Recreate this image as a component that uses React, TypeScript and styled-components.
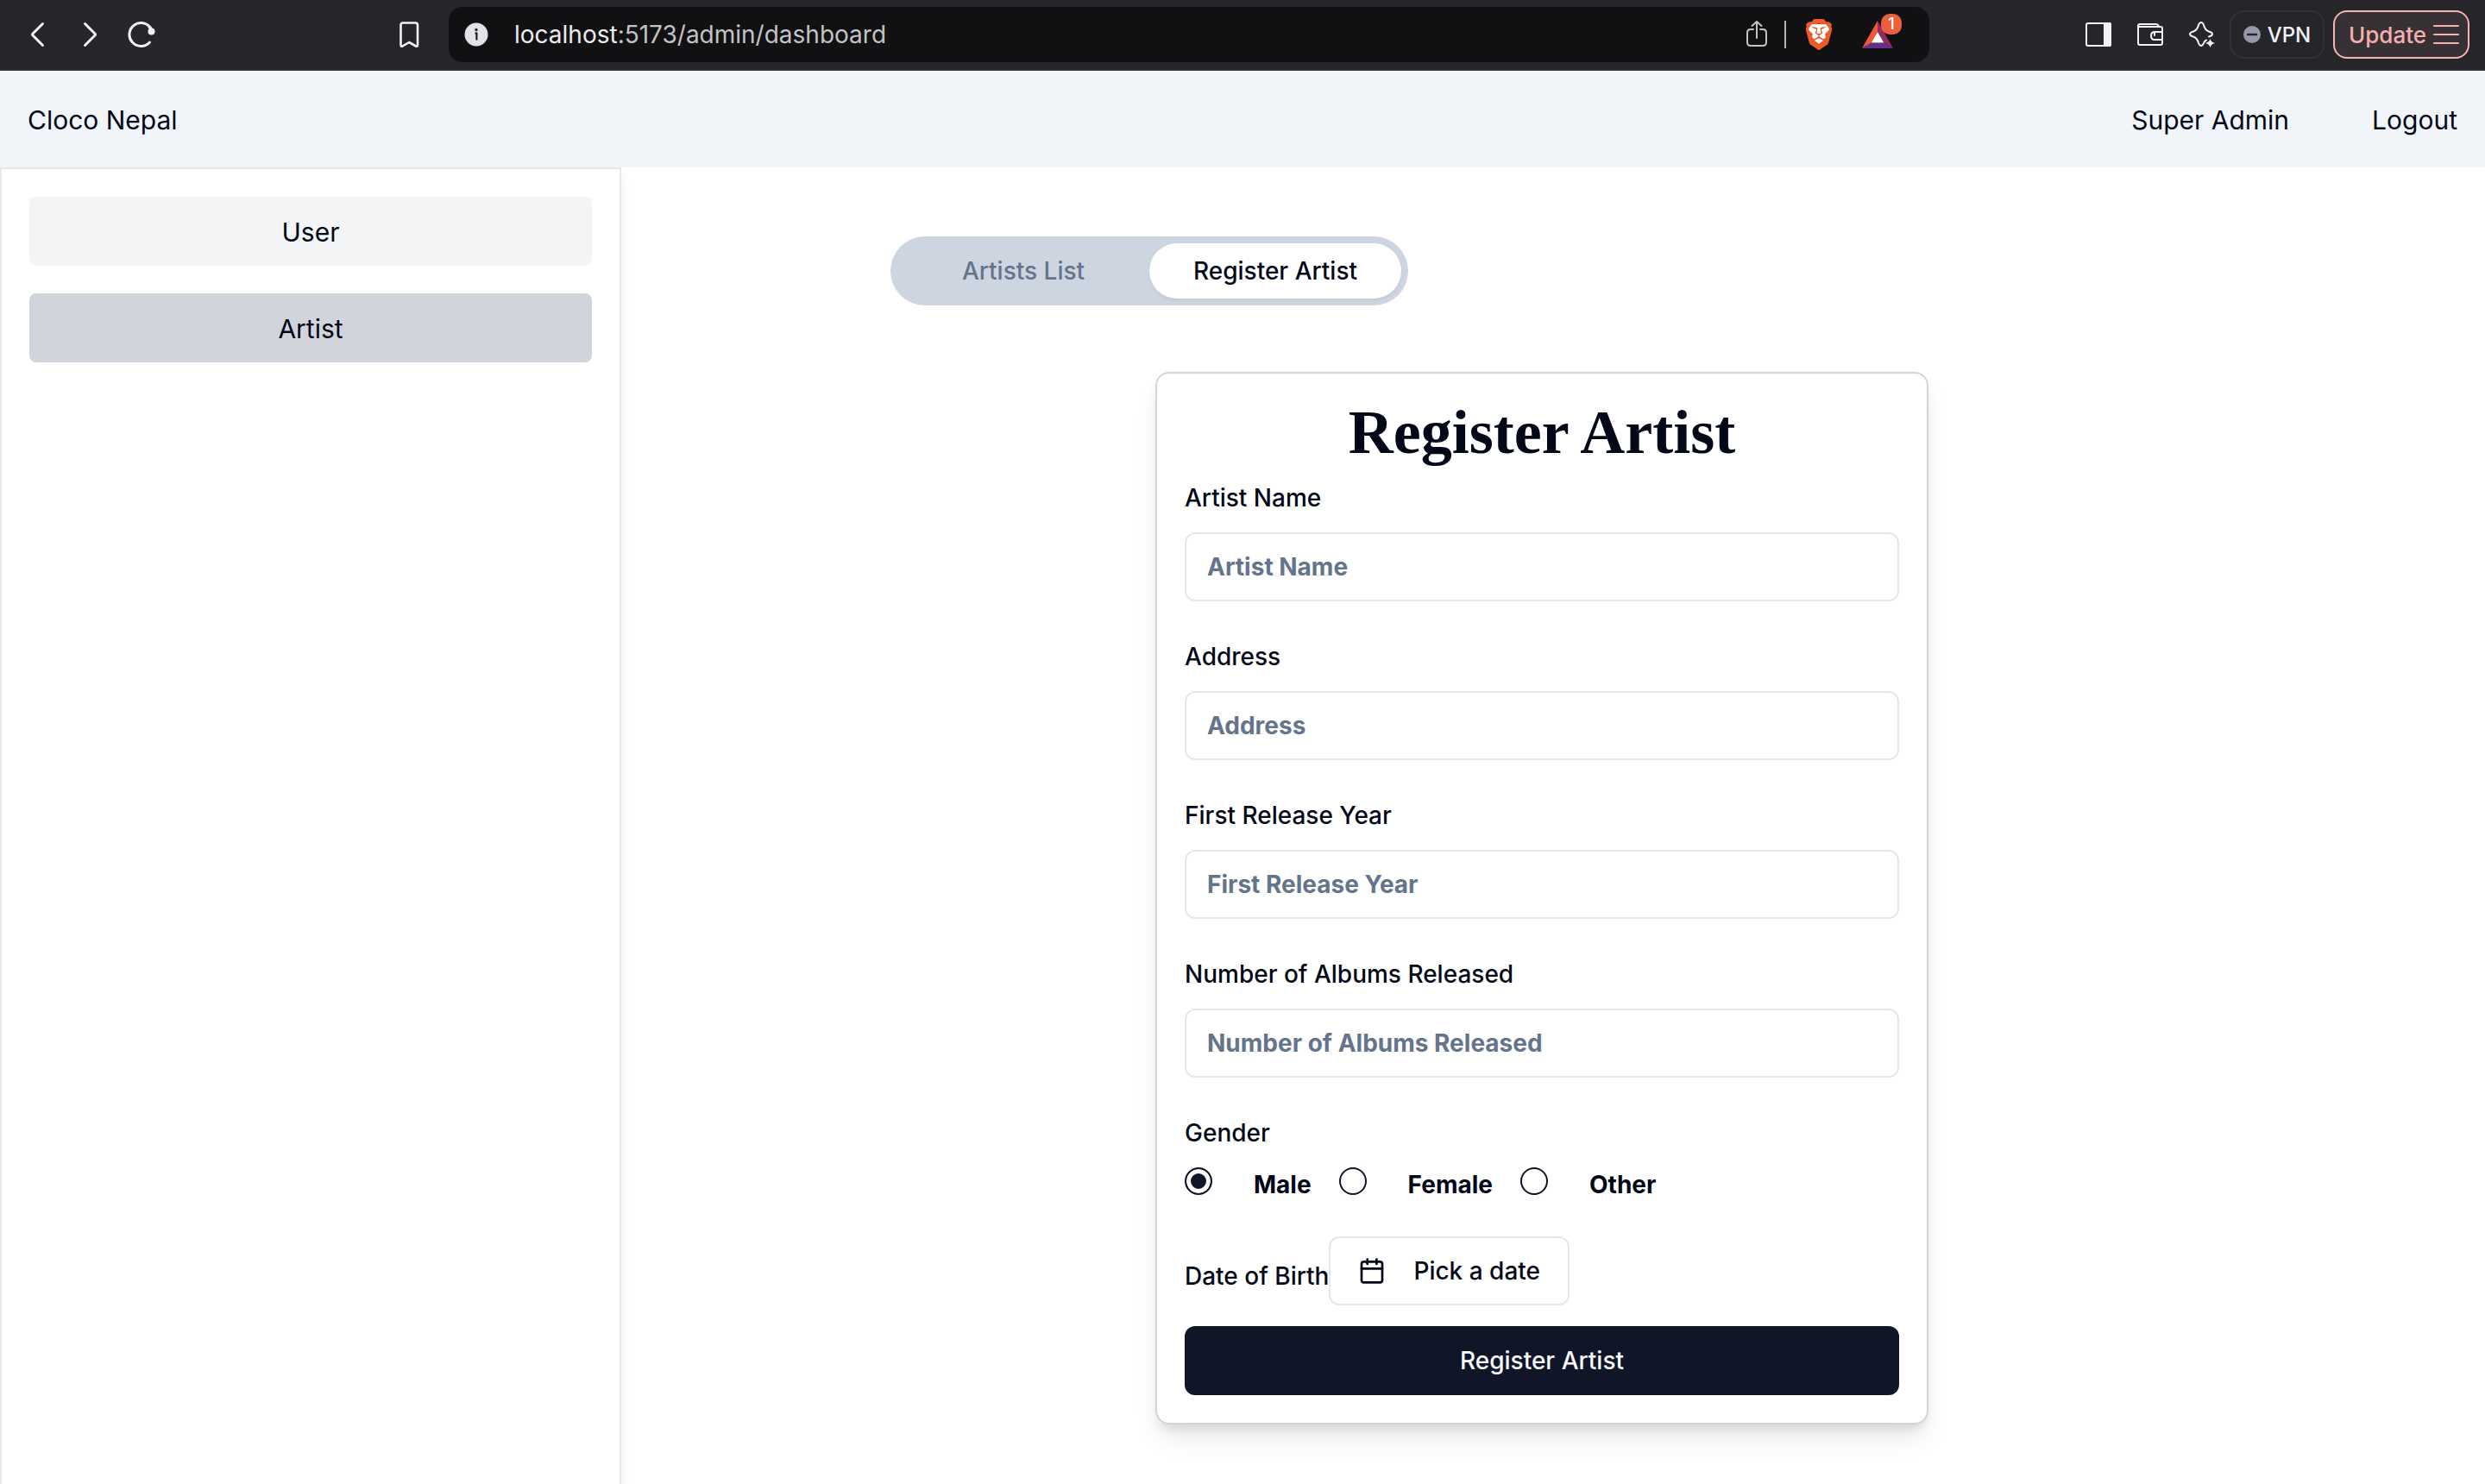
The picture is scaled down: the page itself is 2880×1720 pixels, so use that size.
import React, { useState } from "react";
import styled, { createGlobalStyle } from "styled-components";
import { SiBrave } from "react-icons/si";

const ink = "#020817";
const navy = "#111528";
const muted = "#64748b";
const line = "#e2e8f0";
const chrome = "#26252a";
const chromeIcon = "#f1f2f5";
const sans = `Inter, "Liberation Sans", sans-serif`;

const GlobalStyle = createGlobalStyle`
  *, *::before, *::after { box-sizing: border-box; }
  body { margin: 0; background: #fff; color: ${ink}; font-family: ${sans}; }
  button, input { font: inherit; color: inherit; margin: 0; }
  button { cursor: pointer; border: 0; background: none; padding: 0; }
  svg { display: block; }
`;

const Page = styled.div`
  display: flex;
  flex-direction: column;
  min-height: 100vh;
`;

/* Browser toolbar */

const Toolbar = styled.div`
  display: flex;
  align-items: center;
  height: 82px;
  padding: 0 18px 0 14px;
  background: ${chrome};
  border-bottom: 2px solid #352f33;
  color: ${chromeIcon};
`;

const NavGroup = styled.div`
  display: flex;
  width: 490px;
`;

const IconButton = styled.button<{ $push?: boolean }>`
  display: grid;
  place-items: center;
  width: 60px;
  height: 60px;
  margin-left: ${(p) => (p.$push ? "auto" : "0")};
`;

const AddressBar = styled.div`
  display: flex;
  align-items: center;
  flex: 1;
  height: 64px;
  margin: 0 166px 0 16px;
  padding: 0 32px 0 18px;
  background: #111113;
  border-radius: 16px;
`;

const Url = styled.div`
  flex: 1;
  padding-left: 30px;
  font-size: 28px;
  line-height: 40px;
  color: #c3c3c5;

  span { color: #ececee; }
`;

const BarActions = styled.div`
  display: flex;
  align-items: center;
`;

const BarDivider = styled.span`
  width: 2px;
  height: 32px;
  margin: 0 20px;
  background: #b5b5b7;
`;

const BarButton = styled.button`
  position: relative;
  display: grid;
  place-items: center;
`;

const RewardsButton = styled(BarButton)`
  margin-left: 32px;
  padding-right: 10px;
`;

const Badge = styled.span`
  position: absolute;
  top: -8px;
  right: 0;
  width: 24px;
  height: 24px;
  border-radius: 10px;
  background: #ec5f3c;
  color: #fff;
  font-size: 18px;
  font-weight: 500;
  line-height: 24px;
  text-align: center;
`;

const ChromeButton = styled.button`
  display: flex;
  align-items: center;
  justify-content: center;
  width: 110px;
  height: 56px;
  margin-left: 2px;
  gap: 8px;
  border: 2px solid #323136;
  border-radius: 16px;
  font-size: 24px;
  font-weight: 500;
`;

const UpdateButton = styled(ChromeButton)`
  width: 158px;
  margin-left: 10px;
  padding-left: 6px;
  border-color: #f8b4b0;
  background: #373034;
  color: #f5b0ad;
  font-size: 26px;
`;

/* Application */

const Header = styled.header`
  display: flex;
  align-items: center;
  justify-content: space-between;
  height: 112px;
  padding: 2px 32px 0;
  background: #f1f5fa;
  font-size: 30px;
  line-height: 48px;
`;

const HeaderLinks = styled.nav`
  display: flex;
  gap: 96px;

  a { color: inherit; text-decoration: none; }
`;

const Body = styled.div`
  display: flex;
  flex: 1;
`;

const Sidebar = styled.aside`
  display: flex;
  flex-direction: column;
  gap: 32px;
  width: 25%;
  padding: 32px;
  border: 2px solid #e5e7eb;
  border-bottom: 0;
  box-shadow: 0 8px 12px -2px rgba(0, 0, 0, 0.1);
`;

const SideButton = styled.button<{ $active?: boolean }>`
  height: 80px;
  padding-top: 2px;
  border-radius: 8px;
  background: ${(p) => (p.$active ? "#d1d5db" : "#f3f4f6")};
  font-size: 30px;
  line-height: 48px;
`;

const Main = styled.main`
  flex: 1;
  padding: 80px 338px 60px 312px;
`;

const TabList = styled.div`
  display: grid;
  grid-template-columns: 1fr 1fr;
  width: 600px;
  height: 80px;
  padding: 8px;
  border-radius: 40px;
  background: #cdd5e1;
`;

const Tab = styled.button<{ $active?: boolean }>`
  border-radius: 32px;
  font-size: 28px;
  font-weight: 500;
  line-height: 40px;
  color: ${(p) => (p.$active ? ink : muted)};
  background: ${(p) => (p.$active ? "#fff" : "transparent")};
  box-shadow: ${(p) => (p.$active ? "0 2px 4px rgba(0, 0, 0, 0.06)" : "none")};
`;

const Card = styled.form`
  display: flex;
  flex-direction: column;
  width: 100%;
  max-width: 896px;
  margin: 77px auto 0;
  padding: 32px;
  border: 2px solid #d1d5db;
  border-radius: 16px;
  box-shadow: 0 20px 30px -6px rgba(0, 0, 0, 0.1), 0 8px 12px -4px rgba(0, 0, 0, 0.1);
`;

const Title = styled.h1`
  margin: 0 0 20px;
  font-family: "Liberation Serif", serif;
  font-size: 72px;
  font-weight: 700;
  line-height: 72px;
  text-align: center;
`;

const Field = styled.div`
  display: flex;
  flex-direction: column;
  gap: 20px;
  margin-bottom: 44px;
`;

const Label = styled.label`
  font-size: 28px;
  font-weight: 500;
  line-height: 40px;
`;

const TextInput = styled.input`
  width: 100%;
  height: 80px;
  padding: 0 24px;
  border: 2px solid ${line};
  border-radius: 12px;
  background: #fff;
  font-size: 28px;
  font-weight: 700;

  &::placeholder { color: ${muted}; opacity: 1; }
`;

const RadioSet = styled.fieldset`
  margin: 0 0 40px;
  padding: 0;
  border: 0;
`;

const Legend = styled.legend`
  margin-bottom: 20px;
  padding: 0;
  font-size: 28px;
  font-weight: 500;
  line-height: 40px;
`;

const RadioRow = styled.div`
  display: flex;
  align-items: flex-start;
  gap: 32px;
`;

const RadioOption = styled.label`
  display: flex;
  align-items: flex-start;
  gap: 48px;
  font-size: 28px;
  font-weight: 700;
  line-height: 40px;
`;

const Radio = styled.input`
  appearance: none;
  width: 32px;
  height: 32px;
  border: 2px solid ${navy};
  border-radius: 50%;
  background: #fff;

  &:checked {
    background: ${navy};
    box-shadow: inset 0 0 0 5px #fff;
  }
`;

const DateRow = styled.div`
  display: flex;
  align-items: center;
  margin-bottom: 24px;
`;

const DateLabel = styled(Label)`
  padding-top: 12px;
`;

const DateButton = styled.button`
  display: flex;
  align-items: center;
  gap: 32px;
  height: 80px;
  padding: 0 32px;
  border: 2px solid ${line};
  border-radius: 12px;
  font-size: 28px;
  font-weight: 500;
`;

const Submit = styled.button`
  height: 80px;
  border-radius: 12px;
  background: ${navy};
  color: #f8fafc;
  font-size: 28px;
  font-weight: 500;
`;

const stroke = {
  fill: "none",
  stroke: "currentColor",
  strokeWidth: 3,
  strokeLinecap: "round" as const,
  strokeLinejoin: "round" as const,
};

const BackIcon = () => (
  <svg width="32" height="32" viewBox="0 0 32 32" {...stroke}>
    <path d="M21.500 3.500 10 15Q9 16 10 17L21.500 28.500" />
  </svg>
);

const ForwardIcon = () => (
  <svg width="32" height="32" viewBox="0 0 32 32" {...stroke}>
    <path d="M10.500 3.500 22 15Q23 16 22 17L10.500 28.500" />
  </svg>
);

const ReloadIcon = () => (
  <svg width="32" height="32" viewBox="0 0 32 32" {...stroke}>
    <path d="M25.500 25A13.500 13.500 0 1 1 27 9" />
    <circle cx="27.500" cy="12.500" r="4" fill="currentColor" stroke="none" />
    <path d="M24.500 6.500 28 12" />
  </svg>
);

const BookmarkIcon = () => (
  <svg width="32" height="32" viewBox="0 0 32 32" {...stroke} strokeWidth={2.6}>
    <path d="M6.500 28V5Q6.500 2.500 9 2.500H23.500Q26 2.500 26 5V28Q26 30.500 24 29.500L16.200 25 8.500 29.500Q6.500 30.500 6.500 28Z" />
  </svg>
);

const InfoIcon = () => (
  <svg width="28" height="28" viewBox="0 0 28 28">
    <circle cx="14" cy="14" r="13.500" fill="#e3e2e7" />
    <circle cx="14" cy="8.500" r="1.700" fill="#111113" />
    <path d="M12.500 12.500H14.400V20.500" fill="none" stroke="#111113" strokeWidth="2" />
  </svg>
);

const ShareIcon = () => (
  <svg width="24" height="32" viewBox="0 0 24 32" {...stroke} stroke="#c3c3c5" strokeWidth={2}>
    <path d="M8 10H5Q1 10 1 14V25Q1 29 5 29H19Q23 29 23 25V14Q23 10 19 10H16" />
    <path d="M12 20V1M6.500 6 12 1 17.500 6" />
  </svg>
);

const BraveIcon = () => (
  <svg width="36" height="36" viewBox="0 0 36 36">
    <path d="M8 6 28 6 31 13 25 28 18 32 11 28 5 13Z" fill="#fff" />
    <SiBrave size={36} color="#ee5a28" />
  </svg>
);

const RewardsIcon = () => (
  <svg width="36" height="32" viewBox="0 0 36 32">
    <path d="M18 0 0 32 11 25.500 18 13Z" fill="#f1562f" />
    <path d="M18 0 36 32 25 25.500 18 13Z" fill="#952a63" />
    <path d="M0 32H36L25 25.500H11Z" fill="#63308c" />
    <path d="M18 13 25.300 25.500H10.700Z" fill="#fff" />
  </svg>
);

const PanelIcon = () => (
  <svg width="30" height="28" viewBox="0 0 30 28">
    <rect x="1" y="1" width="28" height="26" rx="2" fill="none" stroke="currentColor" strokeWidth="2" />
    <path d="M21 0H28Q30 0 30 2V26Q30 28 28 28H21Z" fill="currentColor" />
  </svg>
);

const WalletIcon = () => (
  <svg width="30" height="28" viewBox="0 0 30 28" {...stroke} strokeWidth={2}>
    <path d="M1 4Q1 2 3 2H22Q24 2 25 5H27Q29 5 29 7V24Q29 26 27 26H3Q1 26 1 24ZM1 5H25" />
    <path d="M29 11H20Q16 11 16 15.500T20 20H29M20 12V15" />
  </svg>
);

const SparkleIcon = () => (
  <svg width="30" height="32" viewBox="0 0 30 32" {...stroke} strokeWidth={2}>
    <path d="M20 22.500Q18 23.500 17 26 15.800 29 14 29T11 26Q9.500 20 5 18.500 1 17.500 1 15.500T5 12.500Q9.500 11 11 5 12.200 2 14 2T17 5Q18.500 11 23 12.500 27 13.500 27 15.500T23 18.500" />
    <path d="M24.500 21Q25.500 25 30 26 25.500 27 24.500 31 23.500 27 19 26 23.500 25 24.500 21Z" fill="currentColor" stroke="none" />
  </svg>
);

const VpnIcon = () => (
  <svg width="20" height="20" viewBox="0 0 20 20">
    <circle cx="10" cy="10" r="10" fill="#9698aa" />
    <path d="M5 10H15" stroke={chrome} strokeWidth="2.400" strokeLinecap="round" />
  </svg>
);

const MenuIcon = () => (
  <svg width="30" height="24" viewBox="0 0 30 24" {...stroke} strokeWidth={2}>
    <path d="M1 2H29M1 12H29M1 22H29" />
  </svg>
);

const CalendarIcon = () => (
  <svg width="32" height="32" viewBox="0 0 24 24" {...stroke} strokeWidth={2}>
    <rect x="3" y="4" width="18" height="18" rx="2" />
    <path d="M16 2V6M8 2V6M3 10H21" />
  </svg>
);

const fields = [
  { id: "artist-name", label: "Artist Name" },
  { id: "address", label: "Address" },
  { id: "first-release-year", label: "First Release Year" },
  { id: "albums-released", label: "Number of Albums Released" },
];

const genders = ["Male", "Female", "Other"];

export default function App() {
  const [gender, setGender] = useState("Male");

  return (
    <Page>
      <GlobalStyle />
      <Toolbar>
        <NavGroup>
          <IconButton aria-label="Back"><BackIcon /></IconButton>
          <IconButton aria-label="Forward"><ForwardIcon /></IconButton>
          <IconButton aria-label="Reload"><ReloadIcon /></IconButton>
          <IconButton aria-label="Bookmark" $push><BookmarkIcon /></IconButton>
        </NavGroup>
        <AddressBar>
          <InfoIcon />
          <Url><span>localhost</span>:5173/admin/dashboard</Url>
          <BarActions>
            <BarButton aria-label="Share"><ShareIcon /></BarButton>
            <BarDivider />
            <BarButton aria-label="Shields"><BraveIcon /></BarButton>
            <RewardsButton aria-label="Rewards">
              <RewardsIcon />
              <Badge>1</Badge>
            </RewardsButton>
          </BarActions>
        </AddressBar>
        <IconButton aria-label="Side panel"><PanelIcon /></IconButton>
        <IconButton aria-label="Wallet"><WalletIcon /></IconButton>
        <IconButton aria-label="Assistant"><SparkleIcon /></IconButton>
        <ChromeButton><VpnIcon />VPN</ChromeButton>
        <UpdateButton>Update<MenuIcon /></UpdateButton>
      </Toolbar>

      <Header>
        <span>Cloco Nepal</span>
        <HeaderLinks>
          <a href="#profile">Super Admin</a>
          <a href="#logout">Logout</a>
        </HeaderLinks>
      </Header>

      <Body>
        <Sidebar>
          <SideButton>User</SideButton>
          <SideButton $active>Artist</SideButton>
        </Sidebar>
        <Main>
          <TabList role="tablist">
            <Tab role="tab" aria-selected={false}>Artists List</Tab>
            <Tab role="tab" aria-selected $active>Register Artist</Tab>
          </TabList>
          <Card onSubmit={(e) => e.preventDefault()}>
            <Title>Register Artist</Title>
            {fields.map((f) => (
              <Field key={f.id}>
                <Label htmlFor={f.id}>{f.label}</Label>
                <TextInput id={f.id} type="text" placeholder={f.label} />
              </Field>
            ))}
            <RadioSet>
              <Legend>Gender</Legend>
              <RadioRow>
                {genders.map((g) => (
                  <RadioOption key={g}>
                    <Radio
                      type="radio"
                      name="gender"
                      value={g}
                      checked={gender === g}
                      onChange={() => setGender(g)}
                    />
                    {g}
                  </RadioOption>
                ))}
              </RadioRow>
            </RadioSet>
            <DateRow>
              <DateLabel htmlFor="birth-date">Date of Birth</DateLabel>
              <DateButton id="birth-date" type="button"><CalendarIcon />Pick a date</DateButton>
            </DateRow>
            <Submit type="submit">Register Artist</Submit>
          </Card>
        </Main>
      </Body>
    </Page>
  );
}
